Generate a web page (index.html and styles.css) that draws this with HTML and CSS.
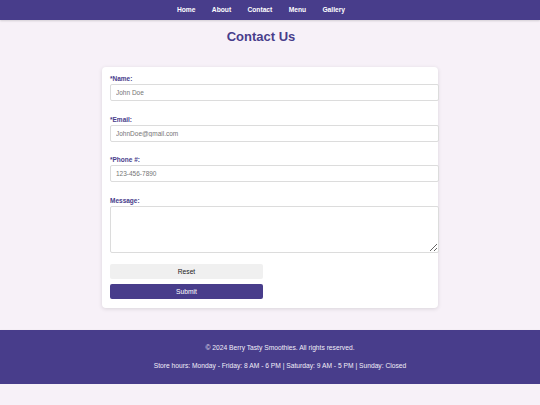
FILE: index.html
```html
<!DOCTYPE html>
<html lang="en">
<head>
<meta charset="utf-8">
<title>Contact Us</title>
<link rel="stylesheet" href="styles.css">
</head>
<body>
<header class="topbar">
  <nav class="nav">
    <a href="#">Home</a>
    <a href="#">About</a>
    <a href="#">Contact</a>
    <a href="#">Menu</a>
    <a href="#">Gallery</a>
  </nav>
</header>
<main>
  <h1 class="title">Contact Us</h1>
  <form class="card">
    <label class="label" for="name">*Name:</label>
    <input class="field" id="name" type="text" placeholder="John Doe">
    <label class="label" for="email">*Email:</label>
    <input class="field" id="email" type="email" placeholder="JohnDoe@gmail.com">
    <label class="label" for="phone">*Phone #:</label>
    <input class="field" id="phone" type="tel" placeholder="123-456-7890">
    <label class="label" for="msg">Message:</label>
    <textarea class="area" id="msg"></textarea>
    <button class="btn btn-reset" type="reset">Reset</button>
    <button class="btn btn-submit" type="button">Submit</button>
  </form>
</main>
<footer class="footer">
  <p class="foot-line first">© 2024 Berry Tasty Smoothies. All rights reserved.</p>
  <p class="foot-line">Store hours: Monday - Friday: 8 AM - 6 PM | Saturday: 9 AM - 5 PM | Sunday: Closed</p>
</footer>
</body>
</html>
```

FILE: styles.css
```css
html, body {
  margin: 0;
  padding: 0;
}
body {
  background: #f7f1f8;
  font-family: "Liberation Sans", Arial, sans-serif;
  color: #333;
}
.topbar {
  background: #483d8b;
  height: 20px;
  box-shadow: 0 1px 2px rgba(0, 0, 0, 0.15);
}
.nav {
  display: flex;
  justify-content: center;
  gap: 16.3px;
  padding-right: 18px;
  height: 20px;
  align-items: center;
}
.nav a {
  color: #ffffff;
  text-decoration: none;
  font-weight: bold;
  font-size: 6.7px;
  line-height: 8px;
}
.title {
  margin: 9px 0 23px;
  padding-right: 18px;
  text-align: center;
  font-size: 13px;
  line-height: 15px;
  color: #483d8b;
  font-weight: bold;
}
.card {
  box-sizing: border-box;
  width: 336px;
  margin: 0 auto;
  padding: 8px 8px 9px;
  background: #ffffff;
  border-radius: 4px;
  box-shadow: 0 1px 4px rgba(0, 0, 0, 0.12);
  display: flex;
  flex-direction: column;
  align-items: flex-start;
}
.label {
  display: block;
  font-size: 6.5px;
  line-height: 8px;
  font-weight: bold;
  color: #483d8b;
  margin-bottom: 1px;
}
.field, .area {
  box-sizing: border-box;
  width: 329px;
  border: 1px solid #dcdcdc;
  border-radius: 2px;
  padding: 0 5px;
  font-family: "Liberation Sans", Arial, sans-serif;
  font-size: 6.5px;
  color: #333;
  background: #ffffff;
  margin: 0 0 14.5px 0;
  outline: none;
}
.field {
  height: 17px;
}
.field::placeholder {
  color: #757575;
}
.area {
  height: 47px;
  margin-bottom: 11px;
  padding: 4px 5px;
  resize: vertical;
}
.btn {
  box-sizing: border-box;
  width: 153px;
  height: 15.5px;
  border: none;
  border-radius: 2px;
  font-family: "Liberation Sans", Arial, sans-serif;
  font-size: 6.7px;
  padding: 0;
}
.btn-reset {
  background: #f0f0f0;
  color: #222;
}
.btn-submit {
  margin-top: 4.5px;
  background: #483d8b;
  color: #ffffff;
}
.footer {
  margin-top: 22px;
  background: #483d8b;
  color: #f2eef8;
  text-align: center;
  padding: 14.3px 0 14.3px 20px;
  box-shadow: 0 1px 2px rgba(0, 0, 0, 0.2);
}
.foot-line {
  margin: 9.4px 0 0;
  font-size: 6.7px;
  line-height: 8px;
}
.foot-line.first {
  margin-top: 0;
}
```
